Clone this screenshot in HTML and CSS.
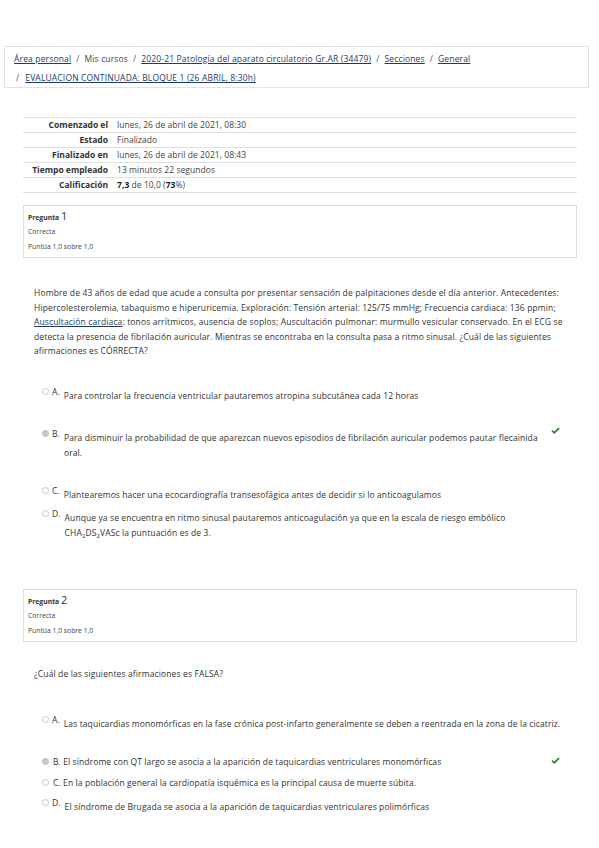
FILE: index.html
```html
<!DOCTYPE html>
<html lang="es">
<head>
<meta charset="utf-8">
<title>Evaluación continuada</title>
<link rel="stylesheet" href="styles.css">
</head>
<body>
<div class="page">
  <nav class="crumbs">
    <div class="crumb-line"><a href="#">Área personal</a><span class="sep">/</span><span class="plain">Mis cursos</span><span class="sep">/</span><a href="#">2020-21 Patología del aparato circulatorio Gr.AR (34479)</a><span class="sep">/</span><a href="#">Secciones</a><span class="sep">/</span><a href="#">General</a></div>
    <div class="crumb-line"><span class="sep first">/</span><a href="#">EVALUACION CONTINUADA: BLOQUE 1 (26 ABRIL, 8:30h)</a></div>
  </nav>

  <table class="summary">
    <tr><th>Comenzado el</th><td>lunes, 26 de abril de 2021, 08:30</td></tr>
    <tr><th>Estado</th><td>Finalizado</td></tr>
    <tr><th>Finalizado en</th><td>lunes, 26 de abril de 2021, 08:43</td></tr>
    <tr><th>Tiempo empleado</th><td>13 minutos 22 segundos</td></tr>
    <tr><th>Calificación</th><td><b>7,3</b> de 10,0 (<b>73</b>%)</td></tr>
  </table>

  <section class="que">
    <div class="info">
      <div class="qno">Pregunta <span class="num">1</span></div>
      <div class="state">Correcta</div>
      <div class="grade">Puntúa 1,0 sobre 1,0</div>
    </div>
    <p class="qtext q1">Hombre de 43 años de edad que acude a consulta por presentar sensación de palpitaciones desde el día anterior. Antecedentes: Hipercolesterolemia, tabaquismo e hiperuricemia. Exploración: Tensión arterial: 125/75 mmHg; Frecuencia cardiaca: 136 ppmin; <a href="#">Auscultación cardiaca</a>: tonos arrítmicos, ausencia de soplos; Auscultación pulmonar: murmullo vesicular conservado. En el ECG se detecta la presencia de fibrilación auricular. Mientras se encontraba en la consulta pasa a ritmo sinusal. ¿Cuál de las siguientes afirmaciones es CÓRRECTA?</p>
    <div class="answers q1a">
      <div class="opt opt-a1"><span class="radio"></span><span class="letter">A.</span><span class="otext">Para controlar la frecuencia ventricular pautaremos atropina subcutánea cada 12 horas</span></div>
      <div class="opt opt-b1"><span class="radio checked"></span><span class="letter">B.</span><span class="otext">Para disminuir la probabilidad de que aparezcan nuevos episodios de fibrilación auricular podemos pautar flecainida oral.</span><svg class="tick" viewBox="0 0 10 8" width="9" height="7"><path d="M1 4.2 L3.6 6.6 L9 1.2" fill="none" stroke="#2f7d32" stroke-width="2"/></svg></div>
      <div class="opt opt-c1"><span class="radio"></span><span class="letter">C.</span><span class="otext">Plantearemos hacer una ecocardiografía transesofágica antes de decidir si lo anticoagulamos</span></div>
      <div class="opt opt-d1"><span class="radio"></span><span class="letter">D.</span><span class="otext">Aunque ya se encuentra en ritmo sinusal pautaremos anticoagulación ya que en la escala de riesgo embólico CHA<sub>2</sub>DS<sub>2</sub>VASc la puntuación es de 3.</span></div>
    </div>
  </section>

  <section class="que que2">
    <div class="info">
      <div class="qno">Pregunta <span class="num">2</span></div>
      <div class="state">Correcta</div>
      <div class="grade">Puntúa 1,0 sobre 1,0</div>
    </div>
    <p class="qtext q2">¿Cuál de las siguientes afirmaciones es FALSA?</p>
    <div class="answers q2a">
      <div class="opt opt-a2"><span class="radio"></span><span class="letter">A.</span><span class="otext wide">Las taquicardias monomórficas en la fase crónica post-infarto generalmente se deben a reentrada en la zona de la cicatriz.</span></div>
      <div class="opt inline opt-b2"><span class="radio checked"></span><span class="otext">B. El síndrome con QT largo se asocia a la aparición de taquicardias ventriculares monomórficas</span><svg class="tick" viewBox="0 0 10 8" width="9" height="7"><path d="M1 4.2 L3.6 6.6 L9 1.2" fill="none" stroke="#2f7d32" stroke-width="2"/></svg></div>
      <div class="opt inline opt-c2"><span class="radio"></span><span class="otext">C. En la población general la cardiopatía isquémica es la principal causa de muerte súbita.</span></div>
      <div class="opt opt-d2"><span class="radio"></span><span class="letter">D.</span><span class="otext">El síndrome de Brugada se asocia a la aparición de taquicardias ventriculares polimórficas</span></div>
    </div>
  </section>
</div>
</body>
</html>
```

FILE: styles.css
```css
* { box-sizing: border-box; }
html, body { margin: 0; padding: 0; background: #fff; }
body {
  font-family: "Open Sans", "Liberation Sans", sans-serif;
  color: #2b2b2b;
  font-size: 8.5px;
}
a { color: #1d3a66; text-decoration: underline; }

.page { padding: 46px 10px 0 4px; }

.crumbs {
  border: 1px solid #e3e3e3;
  height: 42px;
  padding: 2px 0 0 9px;
}
.crumb-line { line-height: 19px; white-space: nowrap; letter-spacing: 0.15px; }
.crumbs .sep { margin: 0 5px; color: #555; }
.crumbs .sep.first { margin-left: 2px; margin-right: 6px; }
.crumbs .plain { color: #444; }

.summary {
  margin: 29px 0 0 19px;
  width: 554px;
  border-collapse: collapse;
}
.summary th, .summary td {
  border-top: 1px solid #e0e0e0;
  height: 15px;
  padding: 0;
  line-height: 14px;
  font-size: 8.5px;
  white-space: nowrap;
}
.summary tr:last-child th, .summary tr:last-child td { border-bottom: 1px solid #e0e0e0; }
.summary th {
  width: 94px;
  text-align: right;
  font-weight: 700;
  padding-right: 9px;
  color: #333;
}
.summary td { color: #444; letter-spacing: 0.05px; }
.summary b { color: #222; }

.que { margin: 12px 0 0 19px; width: 554px; }
.que2 { margin-top: 49px; }

.info {
  border: 1px solid #dedede;
  height: 53px;
  padding: 3px 0 0 4px;
  font-size: 6.8px;
  color: #444;
}
.qno { height: 15px; line-height: 14px; font-weight: 700; font-size: 6.8px; color: #333; }
.qno .num { font-size: 11px; font-weight: 400; }
.state { line-height: 16px; }
.grade { line-height: 14px; }

.qtext {
  margin: 28px 0 0 11px;
  line-height: 14.5px;
  color: #333;
  width: 545px;
  letter-spacing: 0.13px;
}
.qtext.q2 { margin-top: 25px; }

.answers { margin-left: 19px; position: relative; }
.q1a { padding-top: 28px; }
.q2a { padding-top: 34px; }

.opt {
  position: relative;
  display: flex;
  align-items: flex-start;
  line-height: 15px;
  color: #333;
  letter-spacing: 0.1px;
}
.radio {
  flex: none;
  width: 7px;
  height: 7px;
  border: 1px solid #c8c8c8;
  border-radius: 50%;
  margin-top: 1px;
  margin-right: 3px;
  background: #fff;
}
.radio.checked { background: #c9c9c9; border-color: #bdbdbd; }
.letter { flex: none; line-height: 9px; margin-right: 4px; }
.otext { margin-top: 1px; width: 484px; }
.otext.wide { width: 515px; }
.inline .radio { margin-top: 4px; margin-right: 4px; }
.inline .otext { margin-top: 0; width: auto; }
.tick { position: absolute; left: 509px; top: -2px; }
.inline .tick { top: 3px; }
sub { font-size: 6px; vertical-align: -2px; line-height: 0; }

.opt-b1 { margin-top: 26px; }
.opt-c1 { margin-top: 26px; }
.opt-d1 { margin-top: 7px; }
.opt-b2 { margin-top: 23px; }
.opt-c2 { margin-top: 6px; }
.opt-d2 { margin-top: 8px; }
```
